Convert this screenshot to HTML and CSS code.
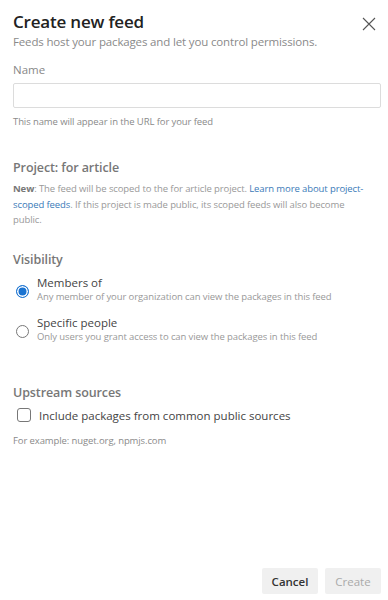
FILE: index.html
```html
<!DOCTYPE html>
<html lang="en">
<head>
    <meta charset="UTF-8">
    <title>Create new feed</title>
    <link rel="stylesheet" href="styles.css">
</head>
<body>
    <div class="panel">
        <div class="header">
            <div>
                <h1>Create new feed</h1>
                <p class="subtitle">Feeds host your packages and let you control permissions.</p>
            </div>
            <button class="close" aria-label="Close">
                <svg width="14" height="14" viewBox="0 0 14 14"><path d="M1 1L13 13M13 1L1 13" stroke="#555" stroke-width="1.1" fill="none"/></svg>
            </button>
        </div>

        <div class="field">
            <label class="label" for="name">Name</label>
            <input type="text" id="name" class="text-input">
            <p class="help">This name will appear in the URL for your feed</p>
        </div>

        <div class="section">
            <h2>Project: for article</h2>
            <p class="note"><strong>New</strong>: The feed will be scoped to the for article project. <a href="#">Learn more about project-scoped feeds</a>. If this project is made public, its scoped feeds will also become public.</p>
        </div>

        <div class="section visibility">
            <h2>Visibility</h2>
            <div class="option">
                <span class="radio checked"></span>
                <div>
                    <div class="option-title">Members of</div>
                    <div class="option-desc">Any member of your organization can view the packages in this feed</div>
                </div>
            </div>
            <div class="option">
                <span class="radio"></span>
                <div>
                    <div class="option-title">Specific people</div>
                    <div class="option-desc">Only users you grant access to can view the packages in this feed</div>
                </div>
            </div>
        </div>

        <div class="section upstream">
            <h2>Upstream sources</h2>
            <div class="check-row">
                <span class="checkbox"></span>
                <span>Include packages from common public sources</span>
            </div>
            <p class="help">For example: nuget.org, npmjs.com</p>
        </div>
    </div>

    <div class="footer">
        <button class="btn">Cancel</button>
        <button class="btn disabled">Create</button>
    </div>
</body>
</html>
```

FILE: styles.css
```css
body {
    margin: 0;
    font-family: "Open Sans", "Noto Sans", sans-serif;
    background: #fff;
    color: #333;
    width: 388px;
    height: 600px;
    display: flex;
    flex-direction: column;
}
.panel {
    padding: 10px 7px 0 13px;
    flex: 1;
}
.header {
    display: flex;
    justify-content: space-between;
    align-items: flex-start;
}
h1 {
    margin: 0;
    font-size: 17px;
    font-weight: 600;
    color: #222;
    line-height: 24px;
    letter-spacing: -0.2px;
}
.subtitle {
    margin: 0;
    font-size: 11.5px;
    color: #8a8a8a;
    line-height: 16px;
    letter-spacing: -0.15px;
}
.close {
    background: none;
    border: none;
    padding: 6px 5px;
    margin-top: 1px;
    cursor: pointer;
}
.field {
    margin-top: 12px;
}
.label {
    display: block;
    font-size: 11.5px;
    color: #888;
    line-height: 16px;
}
.text-input {
    display: block;
    box-sizing: border-box;
    width: 100%;
    height: 25px;
    margin-top: 5px;
    border: 1px solid #dcdcdc;
    border-radius: 2px;
}
.help {
    margin: 7px 0 0;
    font-size: 9.5px;
    color: #8a8a8a;
    line-height: 13px;
    letter-spacing: -0.1px;
}
.section {
    margin-top: 31px;
}
h2 {
    margin: 0;
    font-size: 12.5px;
    font-weight: 600;
    color: #777;
    line-height: 18px;
    letter-spacing: -0.1px;
}
.note {
    margin: 4px 0 0;
    padding-right: 13px;
    font-size: 9.5px;
    color: #999;
    line-height: 15.5px;
    letter-spacing: -0.1px;
}
.note strong {
    color: #777;
}
.note a {
    color: #3a7ab8;
    text-decoration: none;
}
.visibility {
    margin-top: 23px;
}
.option {
    display: flex;
    align-items: center;
    gap: 8px;
    margin-top: 7px;
}
.option + .option {
    margin-top: 13px;
}
.radio {
    box-sizing: border-box;
    width: 13px;
    height: 13px;
    border: 1px solid #777;
    border-radius: 50%;
    margin-left: 3px;
    margin-top: 4px;
    flex-shrink: 0;
}
.radio.checked {
    border: 1.5px solid #1a73d1;
    background: #1a73d1;
    box-shadow: inset 0 0 0 1.5px #fff;
}
.option-title {
    font-size: 11.5px;
    color: #444;
    line-height: 14px;
}
.option-desc {
    font-size: 9.5px;
    color: #999;
    line-height: 13px;
    letter-spacing: -0.1px;
}
.upstream {
    margin-top: 41px;
}
.check-row {
    display: flex;
    align-items: center;
    gap: 8px;
    margin-top: 6px;
    font-size: 11.5px;
    color: #444;
}
.checkbox {
    box-sizing: border-box;
    width: 14px;
    height: 14px;
    border: 1px solid #777;
    border-radius: 3px;
    margin-left: 4px;
}
.upstream .help {
    margin-top: 11px;
}
.footer {
    display: flex;
    justify-content: flex-end;
    gap: 7px;
    padding: 0 7px 6px 0;
}
.btn {
    font-family: "Open Sans", "Noto Sans", sans-serif;
    font-size: 11.5px;
    font-weight: 600;
    background: #f0f0f0;
    border: none;
    border-radius: 2px;
    color: #333;
    width: 56px;
    height: 26px;
    padding: 0;
}
.btn.disabled {
    color: #aaa;
    font-weight: 400;
}
```
